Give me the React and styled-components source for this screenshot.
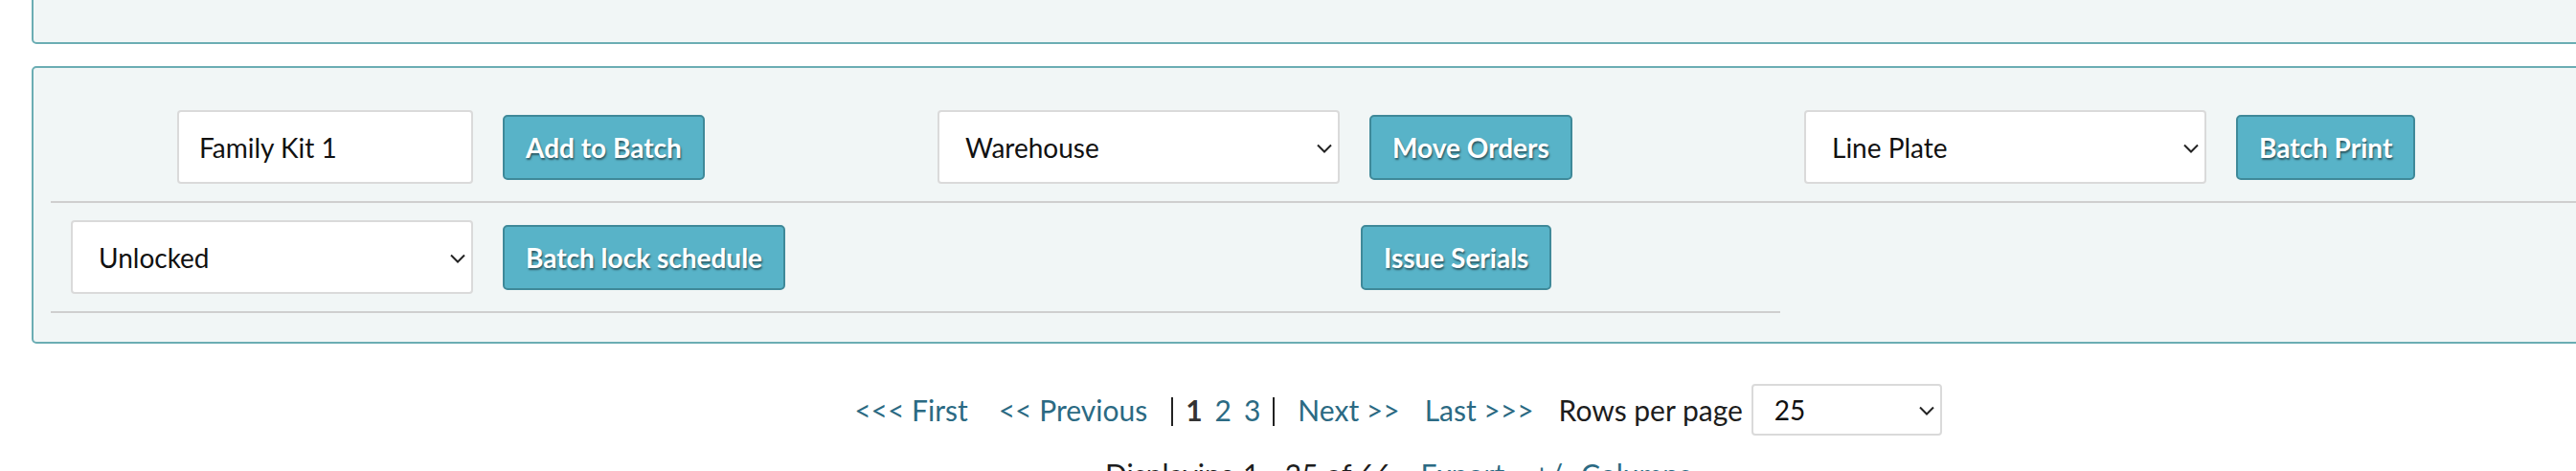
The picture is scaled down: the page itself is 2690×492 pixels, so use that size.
import React from 'react';
import styled, { createGlobalStyle } from 'styled-components';

const GlobalStyle = createGlobalStyle`
  html, body {
    margin: 0;
    padding: 0;
    background: #ffffff;
    overflow: hidden;
  }
  body {
    font-family: Lato, "Source Sans Pro", "Liberation Sans", sans-serif;
    font-size: 28px;
    color: #1d1d1d;
  }
`;

const Page = styled.div`
  width: 2690px;
  height: 492px;
  overflow: hidden;
`;

const Container = styled.div`
  width: 2854px;
  margin-left: 33px;
`;

const Well = styled.div`
  box-sizing: border-box;
  background: #f1f6f6;
  border: 2px solid #6badb3;
  border-radius: 5px;
`;

const TopWell = styled(Well)`
  height: 56px;
  margin-top: -10px;
`;

const BatchWell = styled(Well)`
  margin-top: 23px;
  height: 290px;
  padding-left: 18px;
`;

const Row = styled.div`
  display: flex;
  align-items: center;
  width: ${(p) => p.$width || 'auto'};
  padding: ${(p) => p.$top}px 0 18px;
  border-bottom: 2px solid #cfcfcf;
`;

const Group = styled.div`
  flex: 0 0 905px;
  display: grid;
  grid-template-columns: ${(p) => p.$lead}px auto;
  column-gap: ${(p) => p.$gap}px;
  align-items: center;
  justify-content: start;

  & > :first-child {
    justify-self: end;
  }
`;

const TextInput = styled.input`
  box-sizing: border-box;
  width: 309px;
  height: 77px;
  padding: 0 0 0 21px;
  border: 2px solid #dadada;
  border-radius: 4px;
  background: #ffffff;
  font: inherit;
  color: #111;
  outline: none;
`;

const SelectWrap = styled.div`
  position: relative;
  width: ${(p) => p.$width}px;
  height: ${(p) => p.$height}px;
`;

const Select = styled.select`
  box-sizing: border-box;
  appearance: none;
  width: 100%;
  height: 100%;
  padding: 0 0 0 ${(p) => p.$pad}px;
  border: 2px solid #dadada;
  border-radius: 4px;
  background: #ffffff;
  font: inherit;
  font-size: 28px;
  color: #111;
  outline: none;
`;

const Chevron = styled.svg`
  position: absolute;
  right: 8px;
  top: 50%;
  width: 16px;
  height: 10px;
  margin-top: -4px;
  pointer-events: none;
`;

const Button = styled.button`
  box-sizing: border-box;
  height: 68px;
  padding: 0 22px;
  border: 2px solid #3f8999;
  border-radius: 5px;
  background: #58b3c8;
  color: #ffffff;
  font: inherit;
  font-weight: 700;
  white-space: nowrap;
  text-shadow: 1px 2px 2px rgba(0, 0, 0, 0.5);
  cursor: pointer;
`;

const Pager = styled.div`
  display: flex;
  align-items: center;
  justify-content: center;
  margin-top: 42px;
  font-size: 30px;
`;

const PagerLink = styled.a`
  color: #2b6a83;
  text-decoration: none;
  margin-right: ${(p) => p.$space || 0}px;
  white-space: nowrap;
`;

const Pages = styled.span`
  display: inline-flex;
  align-items: center;
  gap: 13px;
  margin-right: 24px;
  color: #222;
`;

const Pipe = styled.span`
  width: 2px;
  height: 30px;
  margin-top: 4px;
  background: #222;
`;

const Current = styled.b`
  color: #333;
`;

const Label = styled.span`
  margin-right: 9px;
  white-space: nowrap;
`;

const Summary = styled.div`
  display: flex;
  justify-content: center;
  gap: 30px;
  margin-top: 22px;
  font-size: 30px;
`;

function DropDown({ value, width = 420, height = 77, pad = 27 }) {
  return (
    <SelectWrap $width={width} $height={height}>
      <Select $pad={pad} defaultValue={value}>
        <option>{value}</option>
      </Select>
      <Chevron viewBox="0 0 16 10">
        <path d="M1 1.5 L8 8.5 L15 1.5" fill="none" stroke="#222" strokeWidth="2" />
      </Chevron>
    </SelectWrap>
  );
}

export default function App() {
  return (
    <Page>
      <GlobalStyle />
      <Container>
        <TopWell />
        <BatchWell>
          <Row $top={44}>
            <Group $lead={441} $gap={31}>
              <TextInput defaultValue="Family Kit 1" />
              <Button>Add to Batch</Button>
            </Group>
            <Group $lead={441} $gap={31}>
              <DropDown value="Warehouse" />
              <Button>Move Orders</Button>
            </Group>
            <Group $lead={441} $gap={31}>
              <DropDown value="Line Plate" />
              <Button>Batch Print</Button>
            </Group>
          </Row>
          <Row $top={18} $width="1806px">
            <Group $lead={441} $gap={31}>
              <DropDown value="Unlocked" />
              <Button>Batch lock schedule</Button>
            </Group>
            <Group $lead={441} $gap={22}>
              <span />
              <Button>Issue Serials</Button>
            </Group>
          </Row>
        </BatchWell>

        <Pager>
          <PagerLink href="#" $space={32}>&lt;&lt;&lt; First</PagerLink>
          <PagerLink href="#" $space={25}>&lt;&lt; Previous</PagerLink>
          <Pages>
            <Pipe />
            <Current>1</Current>
            <PagerLink href="#">2</PagerLink>
            <PagerLink href="#">3</PagerLink>
            <Pipe />
          </Pages>
          <PagerLink href="#" $space={26}>Next &gt;&gt;</PagerLink>
          <PagerLink href="#" $space={26}>Last &gt;&gt;&gt;</PagerLink>
          <Label>Rows per page</Label>
          <DropDown value="25" width={199} height={54} pad={22} />
        </Pager>

        <Summary>
          <span>Displaying 1 - 25 of 66</span>
          <PagerLink href="#">Export</PagerLink>
          <PagerLink href="#">+/- Columns</PagerLink>
        </Summary>
      </Container>
    </Page>
  );
}
